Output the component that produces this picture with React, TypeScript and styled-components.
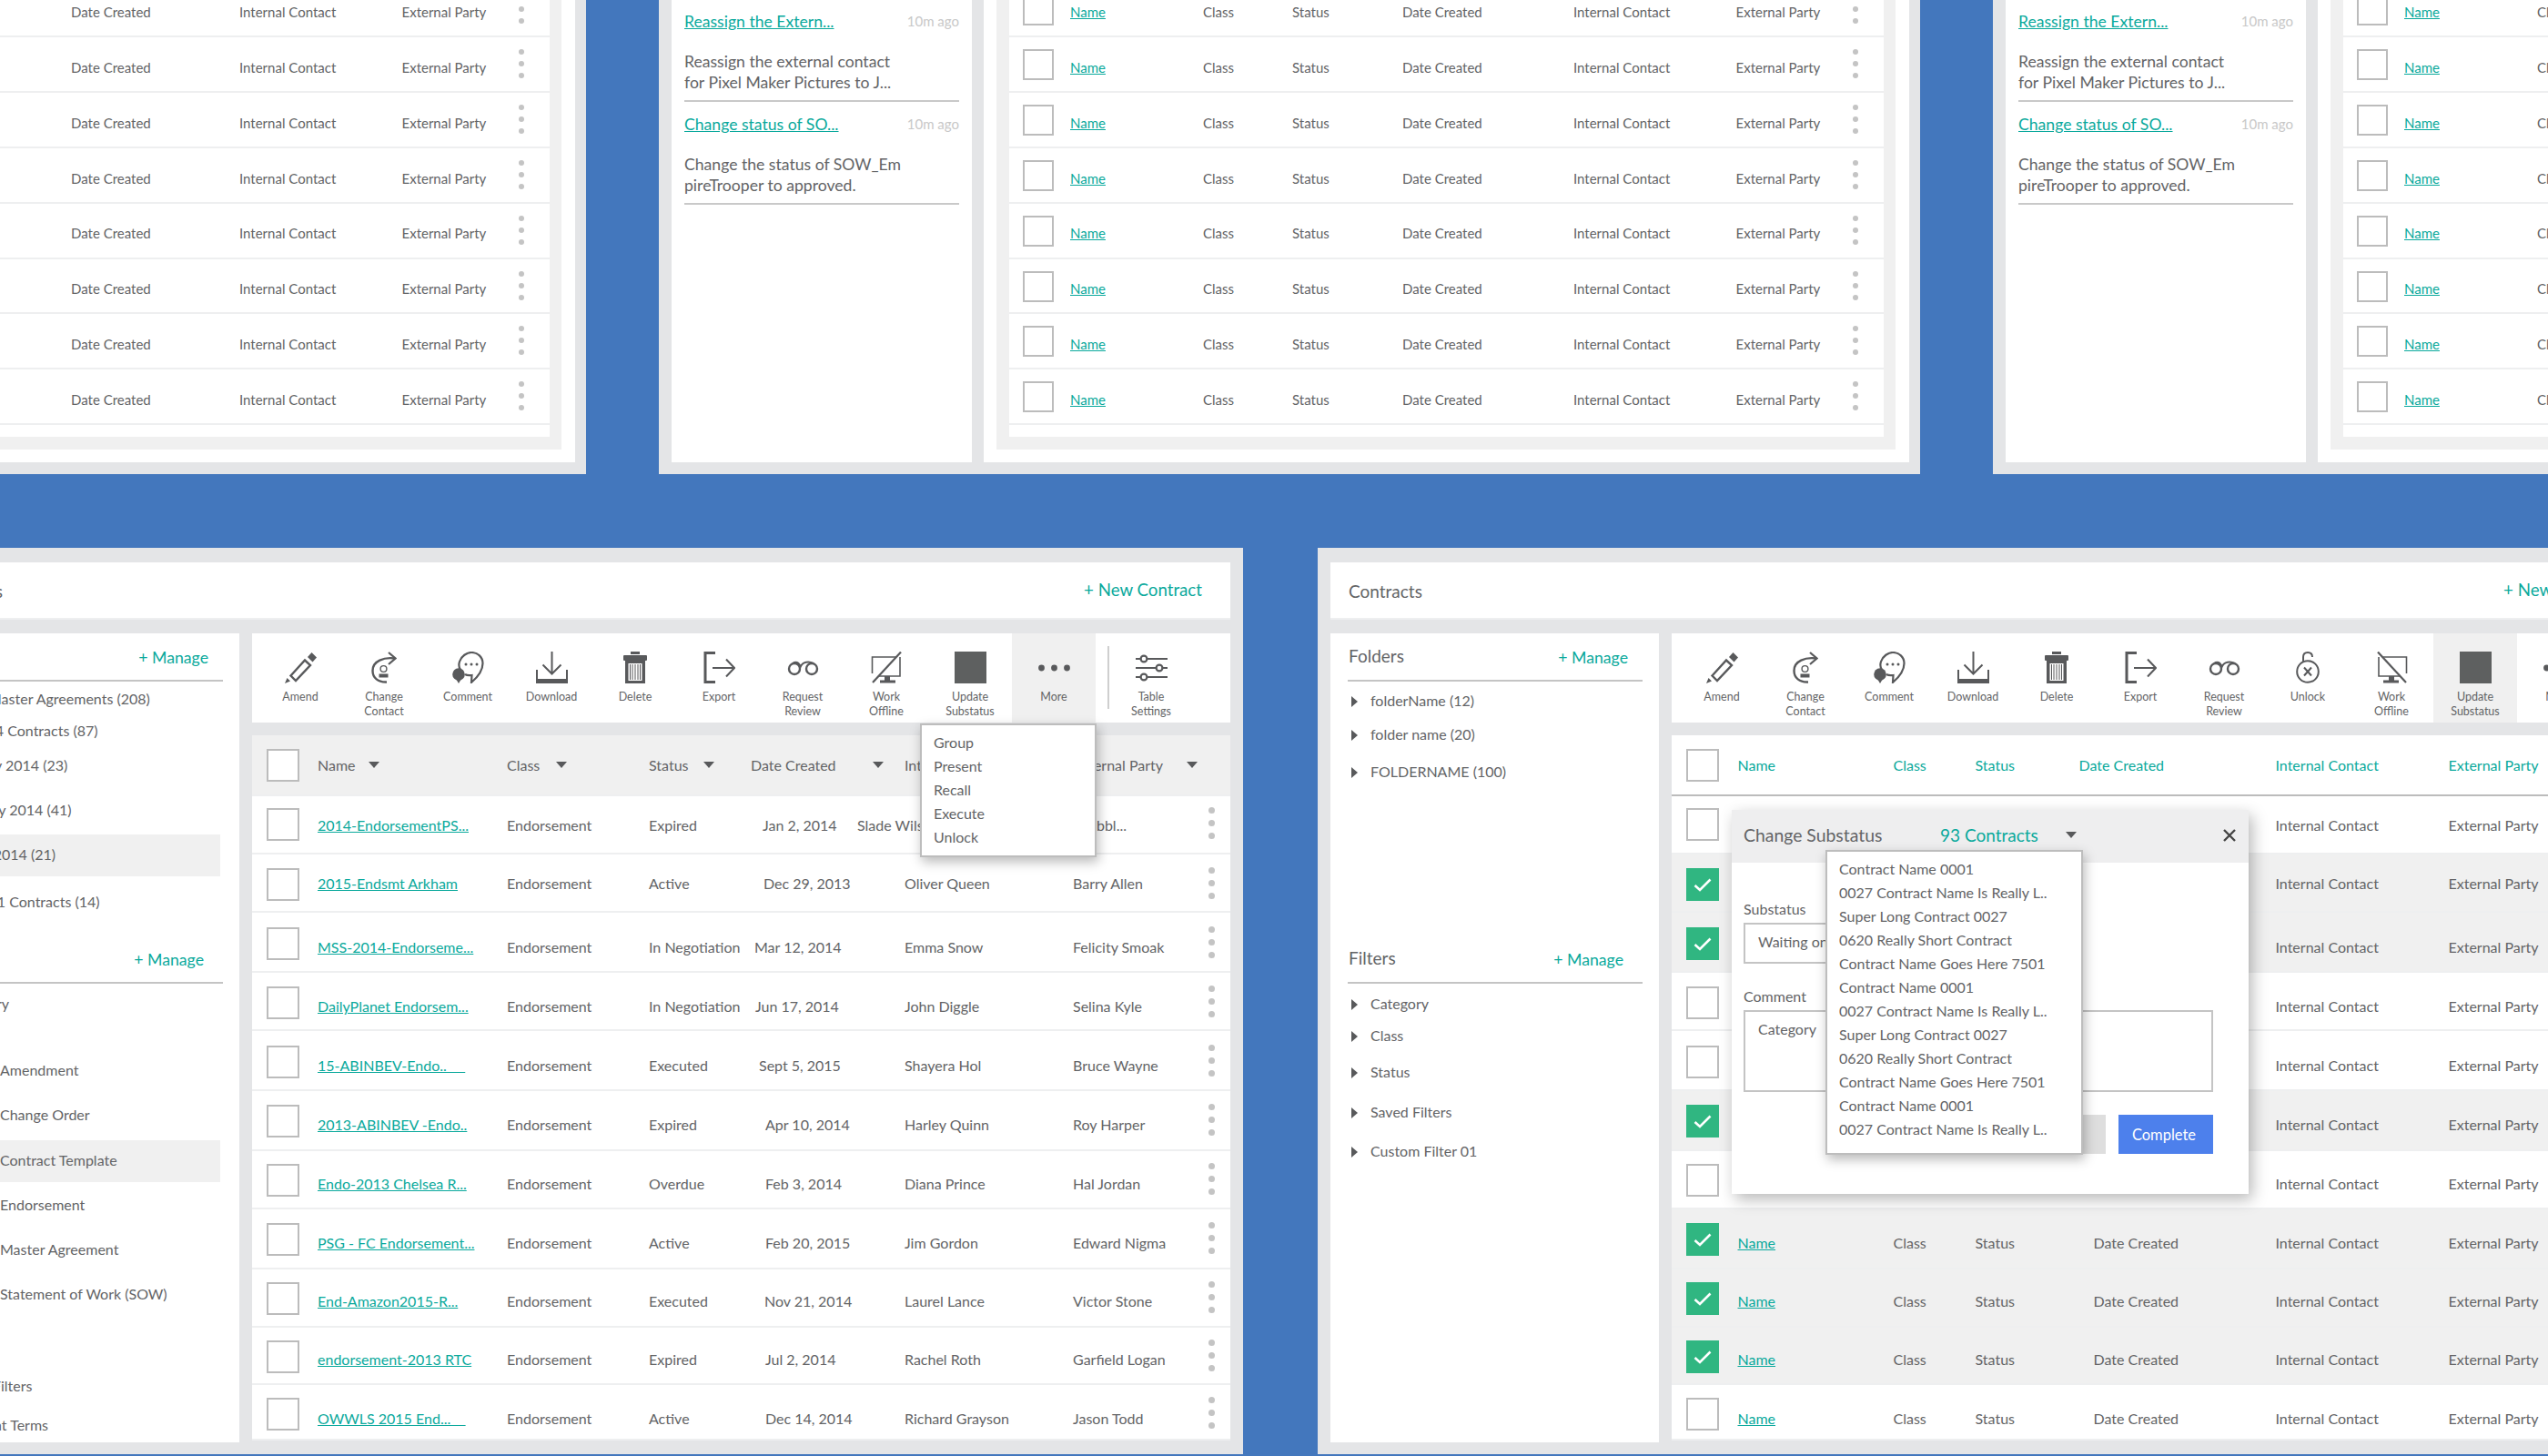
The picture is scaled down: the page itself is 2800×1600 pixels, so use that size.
import React from 'react'
import styled, { createGlobalStyle } from 'styled-components'

const TEAL = '#0aa99c'
const INK = '#636466'
const ICON = '#58595b'
const BOARD = '#e4e5e7'
const SHADE = '#f0f0f0'

const GlobalStyle = createGlobalStyle`
  html, body {
    margin: 0;
    padding: 0;
    background: #4377bd;
  }
  * { box-sizing: border-box; }
`

const Canvas = styled.div`
  position: relative;
  width: 2800px;
  height: 1600px;
  overflow: hidden;
  background: #4377bd;
  font-family: Lato, "Open Sans", sans-serif;
  color: ${INK};
`

/* ---------- icons ---------- */

const Svg = styled.svg<{ $flip?: boolean }>`
  display: block;
  transform: ${p => (p.$flip ? 'scaleX(-1)' : 'none')};
`

const AmendIcon = () => (
  <Svg width="35" height="35" viewBox="0 0 35 35">
    <polygon points="0,35 2.5,29 6,32.5" fill={ICON} />
    <polygon points="6.5,26.5 22,9.5 28,15 12,32" fill="none" stroke={ICON} strokeWidth="2.4" />
    <polygon points="25,6 29.5,1 35,6.5 30.5,11.5" fill={ICON} />
  </Svg>
)

const ContactIcon = () => (
  <Svg width="28" height="35" viewBox="0 0 28 35">
    <path d="M26 7.5 C14 6 1.5 10 1.5 21 C1.5 29 7.5 34 17 33.5" fill="none" stroke={ICON} strokeWidth="2.4" />
    <path d="M19 1 L26.5 7.5 L19 14" fill="none" stroke={ICON} strokeWidth="2.2" />
    <circle cx="13.5" cy="19" r="3.4" fill="none" stroke={ICON} strokeWidth="1.4" />
    <rect x="8.5" y="24.5" width="10" height="4" fill={ICON} />
  </Svg>
)

const CommentIcon = () => (
  <Svg width="35" height="35" viewBox="0 0 35 35">
    <path d="M9 20 C7 17 7 14 8 11 C10 5 16 1 21 1 C28 1 33.5 6 33.5 13 C33.5 21 28 28 21 34 L21.5 26 C18 26.5 15.5 26 14 25" fill="none" stroke={ICON} strokeWidth="2.2" />
    <circle cx="7" cy="25" r="6.8" fill={ICON} />
    <polygon points="4,30 7,35 10,30" fill={ICON} />
    <circle cx="15" cy="14" r="1.5" fill={ICON} />
    <circle cx="21" cy="14" r="1.5" fill={ICON} />
    <circle cx="27" cy="14" r="1.5" fill={ICON} />
  </Svg>
)

const DownloadIcon = () => (
  <Svg width="35" height="35" viewBox="0 0 35 35">
    <path d="M17.5 0 V24 M7.5 14.5 L17.5 24.5 L27.5 14.5" fill="none" stroke={ICON} strokeWidth="2" />
    <path d="M0 20 H2 V30 H33 V20 H35 V35 H0 Z" fill={ICON} />
  </Svg>
)

const DeleteIcon = () => (
  <Svg width="26" height="35" viewBox="0 0 26 35">
    <rect x="8" y="0" width="10" height="3" fill={ICON} />
    <rect x="0" y="4" width="26" height="6" rx="1" fill={ICON} />
    <path d="M2 10 H24 V35 H2 Z" fill={ICON} />
    <rect x="5.5" y="13" width="15" height="19" fill="#fff" />
    <path d="M7.5 14 V31 M10 14 V31 M13 14 V31 M16 14 V31 M18.5 14 V31" stroke={ICON} strokeWidth="1" />
  </Svg>
)

const ExportIcon = () => (
  <Svg width="35" height="35" viewBox="0 0 35 35">
    <path d="M13 1.5 H2 V33.5 H13" fill="none" stroke={ICON} strokeWidth="3" />
    <path d="M10 18 H33 M25 8.5 L34 18 L25 27.5" fill="none" stroke={ICON} strokeWidth="2" />
  </Svg>
)

const ReviewIcon = () => (
  <Svg width="35" height="35" viewBox="0 0 35 35">
    <circle cx="8" cy="19" r="6" fill="none" stroke={ICON} strokeWidth="2.4" />
    <circle cx="27" cy="19" r="6" fill="none" stroke={ICON} strokeWidth="2.4" />
    <path d="M6 13 C9 11 13 11 14.5 17 C17 11 24 10.5 29 13" fill="none" stroke={ICON} strokeWidth="2" />
  </Svg>
)

const UnlockIcon = () => (
  <Svg width="28" height="35" viewBox="0 0 28 35">
    <circle cx="14" cy="22" r="11.8" fill="none" stroke={ICON} strokeWidth="2" />
    <path d="M9 11 V6 C9 2.5 11.5 1 14 1 C17 1 19 3 19 6" fill="none" stroke={ICON} strokeWidth="2" />
    <path d="M10 17.5 L18 26.5 M18 17.5 L10 26.5" stroke={ICON} strokeWidth="2" />
  </Svg>
)

const OfflineIcon = ({ $flip }: { $flip?: boolean }) => (
  <Svg $flip={$flip} width="35" height="35" viewBox="0 0 35 35">
    <path d="M1.5 24 V6 H27 M32 6 V27 H9" fill="none" stroke={ICON} strokeWidth="1.6" />
    <rect x="15" y="27" width="6" height="5" fill={ICON} />
    <rect x="10" y="31.5" width="17" height="3" fill={ICON} />
    <path d="M33 0.5 L2 34" stroke={ICON} strokeWidth="2.2" />
  </Svg>
)

const SubstatusIcon = () => (
  <Svg width="35" height="35" viewBox="0 0 35 35">
    <rect width="35" height="35" fill="#5e6060" />
  </Svg>
)

const MoreIcon = () => (
  <Svg width="35" height="35" viewBox="0 0 35 35">
    <circle cx="3.5" cy="18" r="3.4" fill={ICON} />
    <circle cx="17.5" cy="18" r="3.4" fill={ICON} />
    <circle cx="31.5" cy="18" r="3.4" fill={ICON} />
  </Svg>
)

const SettingsIcon = () => (
  <Svg width="35" height="35" viewBox="0 0 35 35">
    <path d="M0 8 H35 M0 18 H35 M0 28 H35" stroke={ICON} strokeWidth="2" />
    <circle cx="9" cy="8" r="3.4" fill="#fff" stroke={ICON} strokeWidth="2.2" />
    <circle cx="26" cy="18" r="3.4" fill="#fff" stroke={ICON} strokeWidth="2.2" />
    <circle cx="9" cy="28" r="3.4" fill="#fff" stroke={ICON} strokeWidth="2.2" />
  </Svg>
)

/* ---------- shared bits ---------- */

const Box = styled.span<{ $size: number; $checked?: boolean; $top?: number }>`
  display: flex;
  align-items: center;
  justify-content: center;
  width: ${p => p.$size}px;
  height: ${p => p.$size}px;
  margin-top: ${p => p.$top ?? 0}px;
  background: ${p => (p.$checked ? '#30b681' : '#fff')};
  border: 2px solid ${p => (p.$checked ? '#30b681' : '#bcbcbc')};
`

const Tick = () => (
  <svg width="20" height="15" viewBox="0 0 20 15">
    <path d="M1.5 8 L7 13 L18.5 1.5" fill="none" stroke="#fff" strokeWidth="2.6" />
  </svg>
)

const Kebab = styled.span<{ $big?: boolean; $top: number }>`
  display: flex;
  flex-direction: column;
  align-items: center;
  gap: 7px;
  width: ${p => (p.$big ? 7 : 6)}px;
  margin-top: ${p => p.$top}px;
  justify-self: center;
  i {
    display: block;
    width: ${p => (p.$big ? 7 : 6)}px;
    height: ${p => (p.$big ? 7 : 6)}px;
    border-radius: 50%;
    background: #c4c4c4;
  }
`

const Dots = ({ big, top }: { big?: boolean; top: number }) => (
  <Kebab $big={big} $top={top}>
    <i />
    <i />
    <i />
  </Kebab>
)

const Caret = styled.i`
  display: inline-block;
  width: 0;
  height: 0;
  border-left: 6.5px solid transparent;
  border-right: 6.5px solid transparent;
  border-top: 7px solid ${ICON};
`

const TextLink = styled.a`
  color: ${TEAL};
  text-decoration: underline;
  white-space: pre;
`

/* ---------- small boards along the top ---------- */

const SmallBoard = styled.section<{ $left: number }>`
  position: absolute;
  left: ${p => p.$left}px;
  top: -60px;
  width: 1386px;
  height: 581px;
  padding: 0 12px 13px 14px;
  display: flex;
  gap: 13px;
  background: ${BOARD};
`

const Feed = styled.aside`
  width: 330px;
  flex: none;
  padding: 71px 14px 0;
  background: #fff;
`

const FeedItem = styled.article`
  padding-bottom: 8px;
  margin-bottom: 12px;
  border-bottom: 2px solid #c9c9c9;
`

const FeedHead = styled.header`
  display: flex;
  justify-content: space-between;
  align-items: center;
  height: 24px;
  font-size: 17.6px;
`

const FeedTime = styled.span`
  font-size: 15px;
  color: #c8c8c8;
`

const FeedText = styled.p`
  margin: 21px 0 0;
  font-size: 17.6px;
  line-height: 23px;
  white-space: nowrap;
`

const SmallPanel = styled.div`
  flex: 1;
  display: flex;
  padding: 0 15px 14px 14px;
  background: #fff;
`

const SmallInner = styled.div`
  flex: 1;
  padding: 0 13px 14px 14px;
  background: ${SHADE};
`

const SmallRows = styled.div`
  height: 100%;
  padding-bottom: 13px;
  display: flex;
  flex-direction: column;
  justify-content: flex-end;
  background: #fff;
`

const SmallRow = styled.div`
  display: grid;
  grid-template-columns: 52px 146px 98px 121px 188px 178.5px 100.5px 1fr;
  align-items: start;
  height: 60.8px;
  padding-left: 15px;
  border-bottom: 2px solid #eeeff0;
  font-size: 15px;
`

const SmallCell = styled.span<{ $shift?: number }>`
  margin-top: 20.5px;
  margin-left: ${p => p.$shift ?? 0}px;
  line-height: 24px;
  white-space: nowrap;
`

const smallBoard = (left: number, dateShift = 0) => (
  <SmallBoard $left={left} key={left}>
    <Feed>
      <FeedItem>
        <FeedHead>
          <TextLink>Reassign the Extern...</TextLink>
          <FeedTime>10m ago</FeedTime>
        </FeedHead>
        <FeedText>
          Reassign the external contact
          <br />
          for Pixel Maker Pictures to J...
        </FeedText>
      </FeedItem>
      <FeedItem>
        <FeedHead>
          <TextLink>Change status of SO...</TextLink>
          <FeedTime>10m ago</FeedTime>
        </FeedHead>
        <FeedText>
          Change the status of SOW_Em
          <br />
          pireTrooper to approved.
        </FeedText>
      </FeedItem>
    </Feed>
    <SmallPanel>
      <SmallInner>
        <SmallRows>
          {Array.from({ length: 8 }, (_, i) => (
            <SmallRow key={i}>
              <Box $size={34} $top={13} />
              <SmallCell>
                <TextLink>Name</TextLink>
              </SmallCell>
              <SmallCell>Class</SmallCell>
              <SmallCell>Status</SmallCell>
              <SmallCell $shift={dateShift}>Date Created</SmallCell>
              <SmallCell>Internal Contact</SmallCell>
              <SmallCell>External Party</SmallCell>
              <Dots top={13} />
            </SmallRow>
          ))}
        </SmallRows>
      </SmallInner>
    </SmallPanel>
  </SmallBoard>
)

/* ---------- large boards ---------- */

const Board = styled.section<{ $left: number }>`
  position: absolute;
  left: ${p => p.$left}px;
  top: 602px;
  width: 1478px;
  height: 996px;
  padding: 16px 14px 0;
  background: ${BOARD};
`

const TitleBar = styled.header`
  display: flex;
  align-items: center;
  justify-content: space-between;
  height: 63px;
  padding: 0 31px 0 20px;
  margin-bottom: 15px;
  background: #fff;
  border-bottom: 2px solid #eeeff0;
`

const Title = styled.h1`
  margin: 2px 0 0;
  font-size: 19px;
  font-weight: 400;
`

const NewLink = styled.a`
  margin-bottom: 2px;
  color: ${TEAL};
  font-size: 18.7px;
`

const Columns = styled.div`
  display: flex;
  gap: 14px;
  align-items: flex-start;
`

const Sidebar = styled.aside`
  flex: none;
  width: 361px;
  height: 889px;
  background: #fff;
`

const SideSection = styled.div`
  height: 332px;
`

const SideHead = styled.div<{ $pad: number }>`
  height: 53px;
  margin: 0 18px 0 19px;
  border-bottom: 2px solid #c4c4c4;
  display: flex;
  align-items: center;
  justify-content: space-between;
  padding: 0 ${p => p.$pad}px 0 1px;
`

const SideTitle = styled.h2`
  margin: 0 0 3px;
  font-size: 19px;
  font-weight: 400;
`

const ManageLink = styled.a`
  margin-top: 2px;
  color: ${TEAL};
  font-size: 17.7px;
`

const TreeRow = styled.div<{ $gap: number; $h: number; $active?: boolean }>`
  display: flex;
  align-items: center;
  height: ${p => p.$h}px;
  margin: ${p => p.$gap}px 21px 0 0;
  padding-left: 23px;
  background: ${p => (p.$active ? SHADE : 'transparent')};
  font-size: 16px;
  white-space: nowrap;
`

const TreeArrow = styled.i`
  flex: none;
  width: 0;
  height: 0;
  border-top: 6px solid transparent;
  border-bottom: 6px solid transparent;
  border-left: 7px solid ${ICON};
`

const TreeLabel = styled.span<{ $indent: number }>`
  margin: 0 0 3px ${p => p.$indent}px;
`

type TreeEntry = { label: string; y: number; x?: number; active?: boolean }

// y is the centre of the row on the page, listTop the page y where the list starts
const Tree = ({ items, listTop }: { items: TreeEntry[]; listTop: number }) => {
  let cursor = listTop
  return (
    <>
      {items.map(item => {
        const h = item.active ? 46 : 30
        const gap = item.y - h / 2 - cursor
        cursor = item.y + h / 2
        return (
          <TreeRow key={item.label} $gap={gap} $h={h} $active={item.active}>
            <TreeArrow />
            <TreeLabel $indent={item.x ?? 14}>{item.label}</TreeLabel>
          </TreeRow>
        )
      })}
    </>
  )
}

const Main = styled.div`
  position: relative;
  flex: none;
  width: 1075px;
`

const Toolbar = styled.div<{ $pad: number }>`
  display: flex;
  height: 98px;
  padding-left: ${p => p.$pad}px;
  margin-bottom: 14px;
  background: #fff;
  white-space: nowrap;
`

const Tool = styled.div<{ $on?: boolean }>`
  flex: none;
  width: 92px;
  padding-top: 20px;
  display: flex;
  flex-direction: column;
  align-items: center;
  background: ${p => (p.$on ? SHADE : 'transparent')};
`

const ToolLabel = styled.span`
  margin-top: 7px;
  font-size: 12.5px;
  line-height: 16px;
  text-align: center;
`

const ToolRule = styled.span`
  flex: none;
  width: 2px;
  height: 69px;
  margin: 14px 0 0 13px;
  background: #cfcfcf;
`

const ToolItem = ({ icon, label, on }: { icon: React.ReactNode; label: string; on?: boolean }) => (
  <Tool $on={on}>
    {icon}
    <ToolLabel>
      {label.split(' ').map(word => (
        <div key={word}>{word}</div>
      ))}
    </ToolLabel>
  </Tool>
)

const Menu = styled.div<{ $left: number; $top: number; $width: number; $height: number }>`
  position: absolute;
  left: ${p => p.$left}px;
  top: ${p => p.$top}px;
  width: ${p => p.$width}px;
  height: ${p => p.$height}px;
  z-index: 5;
  padding: 6px 13px;
  background: #fff;
  border: 2px solid #bdbdbd;
  box-shadow: 2px 5px 12px rgba(0, 0, 0, 0.28);
`

const MenuItem = styled.div`
  height: 26px;
  line-height: 26px;
  font-size: 16px;
  white-space: nowrap;
`

const Table = styled.div`
  height: 775px;
`

const HeadRow = styled.div<{ $cols: string; $flat?: boolean }>`
  display: grid;
  grid-template-columns: ${p => p.$cols};
  align-items: center;
  height: 67px;
  padding-left: 16px;
  background: ${p => (p.$flat ? '#fff' : SHADE)};
  border-bottom: 2px solid ${p => (p.$flat ? '#bcbcbc' : '#eeeff0')};
  font-size: 16px;
`

const HeadCell = styled.span<{ $flat?: boolean }>`
  display: flex;
  align-items: center;
  color: ${p => (p.$flat ? TEAL : INK)};
  white-space: nowrap;
`

const HeadCaret = styled(Caret)<{ $gap: number }>`
  margin-left: ${p => p.$gap}px;
`

const BodyRow = styled.div<{ $cols: string; $h: number; $shaded?: boolean }>`
  display: grid;
  grid-template-columns: ${p => p.$cols};
  align-items: start;
  height: ${p => p.$h}px;
  padding-left: 16px;
  background: ${p => (p.$shaded ? SHADE : '#fff')};
  border-bottom: 2px solid #eeeff0;
  font-size: 16px;
`

const BodyCell = styled.span<{ $top: number; $nudge?: number }>`
  margin-top: ${p => p.$top}px;
  margin-left: ${p => p.$nudge ?? 0}px;
  line-height: 24px;
  white-space: pre;
`

const FULL_COLS = '56px 208px 156px 112px 169px 185px 132px 1fr'
const WIDE_COLS = '56.5px 171px 90px 114px 216px 190px 1fr'
const WIDE_ROW_COLS = '56.5px 171px 90px 130px 200px 190px 1fr'

// height, checkbox offset and text centre of each of the eleven rows
const ROWS = [
  [64, 13, 32],
  [64, 15, 32],
  [66, 16, 38],
  [64, 15, 37],
  [66, 16, 38],
  [66, 15, 37],
  [64, 14, 36],
  [66, 15, 37],
  [64, 14, 35],
  [63, 14, 35],
  [61, 14, 37]
]

const CONTRACTS = [
  ['2014-EndorsementPS...', 'Expired', 'Jan 2, 2014', 13, 'Slade Wilson', 'Scribbl...', -52],
  ['2015-Endsmt Arkham', 'Active', 'Dec 29, 2013', 14, 'Oliver Queen', 'Barry Allen', 0],
  ['MSS-2014-Endorseme...', 'In Negotiation', 'Mar 12, 2014', 4, 'Emma Snow', 'Felicity Smoak', 0],
  ['DailyPlanet Endorsem...', 'In Negotiation', 'Jun 17, 2014', 5, 'John Diggle', 'Selina Kyle', 0],
  ['15-ABINBEV-Endo..     ', 'Executed', 'Sept 5, 2015', 9, 'Shayera Hol', 'Bruce Wayne', 0],
  ['2013-ABINBEV -Endo..', 'Expired', 'Apr 10, 2014', 16, 'Harley Quinn', 'Roy Harper', 0],
  ['Endo-2013 Chelsea R...', 'Overdue', 'Feb 3, 2014', 16, 'Diana Prince', 'Hal Jordan', 0],
  ['PSG - FC Endorsement...', 'Active', 'Feb 20, 2015', 16, 'Jim Gordon', 'Edward Nigma', 0],
  ['End-Amazon2015-R...', 'Executed', 'Nov 21, 2014', 15, 'Laurel Lance', 'Victor Stone', 0],
  ['endorsement-2013 RTC', 'Expired', 'Jul 2, 2014', 16, 'Rachel Roth', 'Garfield Logan', 0],
  ['OWWLS 2015 End...    ', 'Active', 'Dec 14, 2014', 16, 'Richard Grayson', 'Jason Todd', 0]
] as const

const BASE_TOOLS = [
  { label: 'Amend', icon: <AmendIcon /> },
  { label: 'Change Contact', icon: <ContactIcon /> },
  { label: 'Comment', icon: <CommentIcon /> },
  { label: 'Download', icon: <DownloadIcon /> },
  { label: 'Delete', icon: <DeleteIcon /> },
  { label: 'Export', icon: <ExportIcon /> },
  { label: 'Request Review', icon: <ReviewIcon /> }
]

const LeftBoard = () => (
  <Board $left={-112}>
    <TitleBar>
      <Title>Contracts</Title>
      <NewLink>+ New Contract</NewLink>
    </TitleBar>
    <Columns>
      <Sidebar>
        <SideSection>
          <SideHead $pad={16}>
            <SideTitle>Folders</SideTitle>
            <ManageLink>+ Manage</ManageLink>
          </SideHead>
          <Tree
            listTop={749}
            items={[
              { label: 'Master Agreements (208)', y: 769, x: 55 },
              { label: '2014 Contracts (87)', y: 804, x: 35 },
              { label: 'January 2014 (23)', y: 842, x: 16 },
              { label: 'February 2014 (41)', y: 891, x: 12 },
              { label: 'March 2014 (21)', y: 940, x: 12, active: true },
              { label: '2021 Contracts (14)', y: 992, x: 37 }
            ]}
          />
        </SideSection>
        <SideSection>
          <SideHead $pad={21}>
            <SideTitle>Filters</SideTitle>
            <ManageLink>+ Manage</ManageLink>
          </SideHead>
          <Tree
            listTop={1081}
            items={[
              { label: 'Category', y: 1104 },
              { label: 'Amendment', y: 1177, x: 68 },
              { label: 'Change Order', y: 1226, x: 68 },
              { label: 'Contract Template', y: 1276, x: 68, active: true },
              { label: 'Endorsement', y: 1325, x: 68 },
              { label: 'Master Agreement', y: 1374, x: 68 },
              { label: 'Statement of Work (SOW)', y: 1423, x: 68 },
              { label: 'Saved Filters', y: 1524 },
              { label: 'Payment Terms', y: 1567 }
            ]}
          />
        </SideSection>
      </Sidebar>
      <Main>
        <Toolbar $pad={7}>
          {BASE_TOOLS.map(t => (
            <ToolItem key={t.label} {...t} />
          ))}
          <ToolItem label="Work Offline" icon={<OfflineIcon />} />
          <ToolItem label="Update Substatus" icon={<SubstatusIcon />} />
          <ToolItem label="More" icon={<MoreIcon />} on />
          <ToolRule />
          <ToolItem label="Table Settings" icon={<SettingsIcon />} />
        </Toolbar>
        <Menu $left={734} $top={99} $width={194} $height={147}>
          {['Group', 'Present', 'Recall', 'Execute', 'Unlock'].map(m => (
            <MenuItem key={m}>{m}</MenuItem>
          ))}
        </Menu>
        <Table>
          <HeadRow $cols={FULL_COLS}>
            <Box $size={36} />
            <HeadCell>
              Name
              <HeadCaret $gap={14.5} />
            </HeadCell>
            <HeadCell>
              Class
              <HeadCaret $gap={18} />
            </HeadCell>
            <HeadCell>
              Status
              <HeadCaret $gap={16} />
            </HeadCell>
            <HeadCell>
              Date Created
              <HeadCaret $gap={40} />
            </HeadCell>
            <HeadCell>Internal Contact</HeadCell>
            <HeadCell>
              External Party
              <HeadCaret $gap={26} />
            </HeadCell>
          </HeadRow>
          {CONTRACTS.map((c, i) => {
            const [h, boxTop, textMid] = ROWS[i]
            const top = textMid - 12
            return (
              <BodyRow key={i} $cols={FULL_COLS} $h={h}>
                <Box $size={36} $top={boxTop} />
                <BodyCell $top={top}>
                  <TextLink>{c[0]}</TextLink>
                </BodyCell>
                <BodyCell $top={top}>Endorsement</BodyCell>
                <BodyCell $top={top}>{c[1]}</BodyCell>
                <BodyCell $top={top} $nudge={c[3]}>
                  {c[2]}
                </BodyCell>
                <BodyCell $top={top} $nudge={c[6]}>
                  {c[4]}
                </BodyCell>
                <BodyCell $top={top}>{c[5]}</BodyCell>
                <Dots big top={boxTop - 1} />
              </BodyRow>
            )
          })}
        </Table>
      </Main>
    </Columns>
  </Board>
)

/* ---------- change substatus modal ---------- */

const Modal = styled.div`
  position: absolute;
  left: 66px;
  top: 194px;
  width: 568px;
  height: 422px;
  z-index: 4;
  background: #fff;
  box-shadow: 4px 6px 16px rgba(0, 0, 0, 0.28);
`

const ModalHead = styled.header`
  display: flex;
  align-items: center;
  height: 58px;
  padding: 0 14px 3px 13px;
  background: #eeeeef;
  font-size: 19.4px;
`

const ModalTitle = styled.span`
  width: 216px;
`

const ModalCount = styled.span`
  font-size: 19px;
  color: ${TEAL};
`

const ModalCaret = styled(Caret)`
  margin-left: 30px;
`

const ModalClose = styled.svg`
  margin-left: auto;
`

const ModalBody = styled.div`
  padding: 39px 39px 0 13px;
`

const FieldLabel = styled.label<{ $top?: number }>`
  display: block;
  margin-top: ${p => p.$top ?? 0}px;
  font-size: 16px;
  line-height: 24px;
`

const InputBox = styled.div<{ $height: number; $width: string }>`
  width: ${p => p.$width};
  height: ${p => p.$height}px;
  margin-top: 3px;
  padding: 7px 14px;
  border: 2px solid #c4c4c4;
  font-size: 16px;
  line-height: 24px;
  white-space: nowrap;
`

const ButtonRow = styled.div`
  display: flex;
  justify-content: flex-end;
  gap: 14px;
  margin-top: 25px;
`

const ModalButton = styled.button<{ $primary?: boolean }>`
  width: 104px;
  height: 43px;
  padding: 0 4px 0 0;
  border: 0;
  background: ${p => (p.$primary ? '#4d80ec' : '#dedede')};
  color: ${p => (p.$primary ? '#fff' : INK)};
  font: 400 16.5px Lato, sans-serif;
`

const PICKS = [
  'Contract Name 0001',
  '0027 Contract Name Is Really L..',
  'Super Long Contract 0027',
  '0620 Really Short Contract',
  'Contract Name Goes Here 7501',
  'Contract Name 0001',
  '0027 Contract Name Is Really L..',
  'Super Long Contract 0027',
  '0620 Really Short Contract',
  'Contract Name Goes Here 7501',
  'Contract Name 0001',
  '0027 Contract Name Is Really L..'
]

const SHADED_ROWS = [1, 2, 5, 7, 8, 9]

const RightBoard = () => (
  <Board $left={1448}>
    <TitleBar>
      <Title>Contracts</Title>
      <NewLink>+ New Contract</NewLink>
    </TitleBar>
    <Columns>
      <Sidebar>
        <SideSection>
          <SideHead $pad={16}>
            <SideTitle>Folders</SideTitle>
            <ManageLink>+ Manage</ManageLink>
          </SideHead>
          <Tree
            listTop={749}
            items={[
              { label: 'folderName (12)', y: 771 },
              { label: 'folder name (20)', y: 808 },
              { label: 'FOLDERNAME (100)', y: 849 }
            ]}
          />
        </SideSection>
        <SideSection>
          <SideHead $pad={21}>
            <SideTitle>Filters</SideTitle>
            <ManageLink>+ Manage</ManageLink>
          </SideHead>
          <Tree
            listTop={1081}
            items={[
              { label: 'Category', y: 1104 },
              { label: 'Class', y: 1139 },
              { label: 'Status', y: 1179 },
              { label: 'Saved Filters', y: 1223 },
              { label: 'Custom Filter 01', y: 1266 }
            ]}
          />
        </SideSection>
      </Sidebar>
      <Main>
        <Toolbar $pad={9}>
          {BASE_TOOLS.map(t => (
            <ToolItem key={t.label} {...t} />
          ))}
          <ToolItem label="Unlock" icon={<UnlockIcon />} />
          <ToolItem label="Work Offline" icon={<OfflineIcon $flip />} />
          <ToolItem label="Update Substatus" icon={<SubstatusIcon />} on />
          <ToolItem label="More" icon={<MoreIcon />} />
        </Toolbar>
        <Table>
          <HeadRow $cols={WIDE_COLS} $flat>
            <Box $size={36} />
            <HeadCell $flat>Name</HeadCell>
            <HeadCell $flat>Class</HeadCell>
            <HeadCell $flat>Status</HeadCell>
            <HeadCell $flat>Date Created</HeadCell>
            <HeadCell $flat>Internal Contact</HeadCell>
            <HeadCell $flat>External Party</HeadCell>
          </HeadRow>
          {ROWS.map(([h, boxTop, textMid], i) => {
            const shaded = SHADED_ROWS.includes(i)
            const top = textMid - 12
            return (
              <BodyRow key={i} $cols={WIDE_ROW_COLS} $h={h} $shaded={shaded}>
                <Box $size={36} $top={boxTop} $checked={shaded}>
                  {shaded && <Tick />}
                </Box>
                <BodyCell $top={top}>
                  <TextLink>Name</TextLink>
                </BodyCell>
                <BodyCell $top={top}>Class</BodyCell>
                <BodyCell $top={top}>Status</BodyCell>
                <BodyCell $top={top}>Date Created</BodyCell>
                <BodyCell $top={top}>Internal Contact</BodyCell>
                <BodyCell $top={top}>External Party</BodyCell>
              </BodyRow>
            )
          })}
        </Table>
        <Modal>
          <ModalHead>
            <ModalTitle>Change Substatus</ModalTitle>
            <ModalCount>93 Contracts</ModalCount>
            <ModalCaret />
            <ModalClose width="14" height="14" viewBox="0 0 14 14">
              <path d="M1 1 L13 13 M13 1 L1 13" stroke="#444" strokeWidth="2.4" />
            </ModalClose>
          </ModalHead>
          <ModalBody>
            <FieldLabel>Substatus</FieldLabel>
            <InputBox $width="280px" $height={45}>
              Waiting on Review
            </InputBox>
            <FieldLabel $top={24}>Comment</FieldLabel>
            <InputBox $width="100%" $height={90}>
              Category
            </InputBox>
            <ButtonRow>
              <ModalButton>Cancel</ModalButton>
              <ModalButton $primary>Complete</ModalButton>
            </ButtonRow>
          </ModalBody>
          <Menu $left={103} $top={44} $width={283} $height={335}>
            {PICKS.map((p, i) => (
              <MenuItem key={i}>{p}</MenuItem>
            ))}
          </Menu>
        </Modal>
      </Main>
    </Columns>
  </Board>
)

export default function App() {
  return (
    <>
      <GlobalStyle />
      <Canvas>
        {smallBoard(-742, 3)}
        {smallBoard(724)}
        {smallBoard(2190)}
        <LeftBoard />
        <RightBoard />
      </Canvas>
    </>
  )
}
